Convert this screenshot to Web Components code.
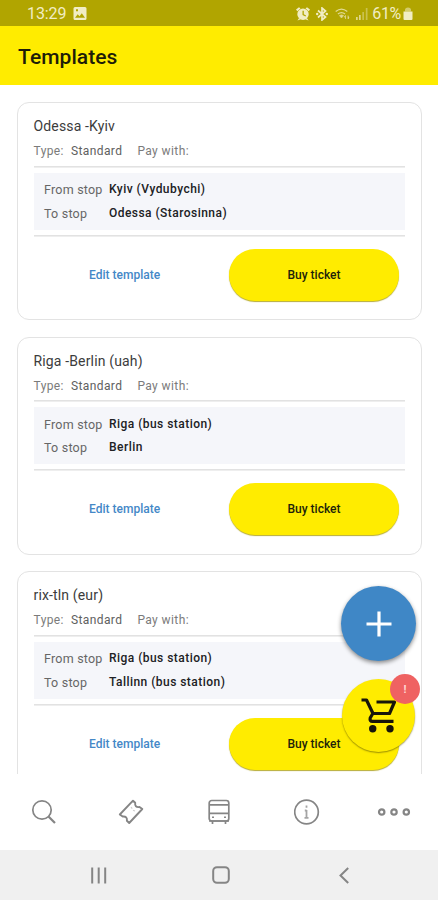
<!DOCTYPE html>
<html lang="en">
<head>
<meta charset="utf-8">
<title>Templates</title>
<style>
html,body{margin:0;height:100%;background:#fff;overflow:hidden}
body{font-family:Roboto,"Liberation Sans",sans-serif}
</style>
</head>
<body>
<app-screen></app-screen>
<script>
function define(name, html) {
  customElements.define(name, class extends HTMLElement {
    constructor() {
      super();
      this.attachShadow({mode: 'open'}).innerHTML = html;
    }
  });
}

define('status-bar', `
<style>
:host{display:flex;align-items:center;height:26px;box-sizing:border-box;background:#b1a500;color:#f1edc4;font-size:16px;padding:1px 25px 0 27px;flex:none}
svg{display:block;fill:currentColor}
.time{letter-spacing:-.1px;margin-right:7px}
.grow{flex:1}
.pct{margin-left:4px;margin-right:1px;letter-spacing:-.3px}
</style>
<span class="time">13:29</span>
<svg width="14" height="13" viewBox="0 0 14 13"><path fill-rule="evenodd" d="M2 0h10a1.500 1.500 0 0 1 1.500 1.500v10A1.500 1.500 0 0 1 12 13H2A1.500 1.500 0 0 1 .5 11.500v-10A1.500 1.500 0 0 1 2 0ZM2 10.800h10L8.800 6.300 6.500 9.200 4.700 7.300ZM3 2.200v2h2v-2Z"/></svg>
<span class="grow"></span>
<svg width="14" height="14" viewBox="0 0 14 14" style="margin-right:6px"><path d="M0 2.500 3 .2 4.500 1.500 1.300 4.200ZM14 2.500 11 .2 9.500 1.500 12.700 4.200Z"/><path fill-rule="evenodd" d="M7 1.500A5.700 5.700 0 1 1 7 12.900 5.700 5.700 0 0 1 7 1.500ZM6.500 3.800V8l3 1.600.6-1L7.800 7.300V3.800Z"/><path d="M1.500 13.500l1.600-2.500 1.600 1.200ZM12.500 13.500l-1.600-2.500-1.600 1.200Z"/></svg>
<svg width="12" height="14" viewBox="0 0 12 14" style="margin-right:7px"><path d="M2 3.500 9.500 10 6 13V1l3.500 3L2 10.500" style="fill:none;stroke:currentColor;stroke-width:1.700"/><circle cx="1.200" cy="7" r="1.200"/><circle cx="10.800" cy="7" r="1.200"/></svg>
<svg width="15" height="12" viewBox="0 0 15 12" style="margin-right:6px;opacity:.75"><path d="M.7 3.500Q6.500-1.200 12.300 3.500M2.900 6Q6.500 3.200 10 6" style="fill:none;stroke:currentColor;stroke-width:1.300"/><path d="M4.500 7.600Q6.500 6.200 8.500 7.600L6.500 10ZM10.500 11V7.500l-1.200 1.300M13 7.500V11l1.200-1.200" style="stroke:currentColor;stroke-width:.7"/></svg>
<svg width="12" height="12" viewBox="0 0 12 12"><path d="M0 9h1.700v3H0ZM3 7h1.700v5H3Z" opacity=".7"/><path d="M6.300 4H8v8H6.300ZM9.800 0h1.700v12H9.800Z" opacity=".4"/></svg>
<span class="pct">61%</span>
<svg width="10" height="13" viewBox="0 0 10 13" style="margin-left:1px"><path d="M.5 4.500h9V12a1 1 0 0 1-1 1h-7a1 1 0 0 1-1-1Z"/><path d="M2 4.500V3a3 2.500 0 0 1 6 0v1.500Z" opacity=".55"/></svg>
`);

define('app-header', `
<style>
:host{display:flex;align-items:center;height:57px;padding:2px 0 0 18px;background:#ffec00;flex:none}
h1{margin:0;font-size:21px;font-weight:500;color:#1e1d08;letter-spacing:.06px;line-height:24px}
</style><h1><slot></slot></h1>`);

define('pill-button', `
<style>
:host{display:flex;align-items:center;justify-content:center;width:170px;height:52px;border-radius:26px;background:#ffec00;box-shadow:0 1px 1px #b7ac35;font-size:12px;font-weight:500;color:#211f0a;letter-spacing:0}
</style><slot></slot>`);

define('stop-row', `
<style>
:host{display:grid;grid-template-columns:65px 1fr;font-size:12.500px;line-height:23.700px;color:#666;white-space:nowrap}
.label{letter-spacing:.22px}
.value{font-weight:500;color:#202124;font-size:12px;letter-spacing:.46px}
</style><span class="label"><slot name="label"></slot></span><span class="value"><slot></slot></span>`);

define('template-card', `
<style>
:host{display:block;box-sizing:border-box;height:218px;border:1.500px solid #e3e3e3;border-radius:12px;padding:13px 16.500px 0 16px;background:#fff;flex:none}
.title{font-size:14px;line-height:20px;color:#3c3c3c;letter-spacing:.15px}
.meta{display:flex;font-size:12px;line-height:16px;color:#7b7b7b;letter-spacing:.4px;margin-top:7px;height:22.500px}
.kind{color:#606060;margin:0 15px 0 7px}
.rule{height:1px;background:#e2e2e2;border-bottom:.5px solid #eee}
.stops{background:#f5f6fa;height:57px;box-sizing:border-box;padding:5.500px 10.500px 0;margin:5px 0}
.actions{display:flex;justify-content:space-between;align-items:center;margin:12px 5.500px 0 0}
.edit{color:#4488c7;font-size:12px;font-weight:500;letter-spacing:.02px;margin-left:55.500px}
</style>
<div class="title"><slot name="title"></slot></div>
<div class="meta"><span>Type:</span><span class="kind">Standard</span><span>Pay with:</span></div>
<div class="rule"></div>
<div class="stops"><slot></slot></div>
<div class="rule"></div>
<div class="actions"><span class="edit">Edit template</span><pill-button>Buy ticket</pill-button></div>
`);

define('floating-actions', `
<style>
:host{position:absolute;left:341px;top:586px;display:flex;flex-direction:column;gap:18px;width:80px}
.fab{display:flex;align-items:center;justify-content:center;box-sizing:border-box;border-radius:50%}
.add{width:75px;height:75px;background:#3f87c6;box-shadow:0 2px 4px rgba(0,0,0,.45)}
.cart{width:73px;height:73px;margin-left:1px;background:#ffec00;box-shadow:0 1px 1.500px rgba(100,90,0,.65)}
.badge{position:absolute;left:49px;top:88px;width:30px;height:30px;border-radius:50%;background:#ef6262;color:#ffd9d5;display:flex;align-items:center;justify-content:center;font-size:11px;font-weight:700}
</style>
<div class="fab add"><svg width="26" height="26" viewBox="0 0 26 26"><path d="M13 .5v25M.5 13h25" stroke="#fff" stroke-width="3.200"/></svg></div>
<div class="fab cart"><svg width="36" height="36" viewBox="0 0 36 36" style="margin:1px 0 0 1px"><path d="M.5 2H5.500L12 15.500M15.500 4H33.500L28.500 15.500H11.800L9.200 20Q8.500 23.300 11.500 23.300H32.500" fill="none" stroke="#17150a" stroke-width="3.200" stroke-linejoin="round"/><circle cx="11.700" cy="30.700" r="3.700" fill="#17150a"/><circle cx="29" cy="30.700" r="3.700" fill="#17150a"/></svg></div>
<div class="badge">!</div>
`);

define('tab-bar', `
<style>
:host{display:flex;height:76px;background:#fff;align-items:center;flex:none}
span{flex:1;display:flex;justify-content:center}
svg{display:block;fill:none;stroke:#858585;stroke-width:1.700;stroke-linejoin:round}
</style>
<span><svg width="26" height="26" viewBox="0 0 26 26"><circle cx="11" cy="11" r="9.200"/><path d="m17.500 17.500 6.500 6.500" stroke-width="2.200"/></svg></span>
<span><svg width="26" height="26" viewBox="0 0 26 26"><path d="M15 1.700 17.200 3.800Q16.500 8.700 21.500 8L24.300 10 11.200 24 8.900 21.800Q9.500 17 4.700 17.500L1.800 15.500Z" stroke-width="1.900"/><path d="m13 8 1.200 1.600M15 11.200l2 .8" stroke-width="1.200" opacity=".4"/></svg></span>
<span><svg width="24" height="26" viewBox="0 0 24 26"><rect x="2.200" y="1.500" width="19.600" height="20.500" rx="2.500"/><path d="M2 5.800h20M2 14.300h20M2 22h20M5.500 22v3M18.500 22v3"/><path d="M5 18.300h2M17 18.300h2" stroke-width="1.500"/></svg></span>
<span><svg width="26" height="26" viewBox="0 0 26 26"><circle cx="12.500" cy="13" r="11.800"/><path d="M12.500 11v8M10.800 11.500h1.700M10.500 18.800h4M12.500 6.500v2.200" stroke-width="1.800" opacity=".75"/></svg></span>
<span><svg width="34" height="10" viewBox="0 0 34 10"><g stroke-width="2.200"><circle cx="4.700" cy="5" r="2.700"/><circle cx="17" cy="5" r="2.700"/><circle cx="29.300" cy="5" r="2.700"/></g></svg></span>
`);

define('system-nav', `
<style>
:host{display:flex;height:50px;background:#f0f0f0;align-items:center;justify-content:space-between;padding:0 89.500px 0 90px;flex:none}
svg{display:block;fill:none;stroke:#858585;stroke-width:2}
.home{margin-right:3px}
</style>
<svg width="17" height="17" viewBox="0 0 17 17"><path d="M2.200 .5v16M8.700 .5v16M15.200 .5v16"/></svg>
<svg class="home" width="18" height="18" viewBox="0 0 18 18"><rect x="1.200" y="1.200" width="15.600" height="15.600" rx="3.800"/></svg>
<svg width="10" height="17" viewBox="0 0 10 17"><path d="M9.200 1 1.500 8.500 9.200 16"/></svg>
`);

define('app-screen', `
<style>
:host{display:flex;flex-direction:column;width:438px;height:900px;position:relative;overflow:hidden;background:#fff}
main{flex:1;min-height:0;overflow:hidden;display:flex;flex-direction:column;gap:16.500px;padding:17px 16px 0 16.500px}
</style>
<status-bar></status-bar>
<app-header>Templates</app-header>
<main>
<template-card><span slot="title">Odessa -Kyiv</span>
<stop-row><span slot="label">From stop</span>Kyiv (Vydubychi)</stop-row>
<stop-row><span slot="label">To stop</span>Odessa (Starosinna)</stop-row></template-card>
<template-card><span slot="title">Riga -Berlin (uah)</span>
<stop-row><span slot="label">From stop</span>Riga (bus station)</stop-row>
<stop-row><span slot="label">To stop</span>Berlin</stop-row></template-card>
<template-card><span slot="title">rix-tln (eur)</span>
<stop-row><span slot="label">From stop</span>Riga (bus station)</stop-row>
<stop-row><span slot="label">To stop</span>Tallinn (bus station)</stop-row></template-card>
</main>
<tab-bar></tab-bar>
<system-nav></system-nav>
<floating-actions></floating-actions>
`);
</script>
</body>
</html>
